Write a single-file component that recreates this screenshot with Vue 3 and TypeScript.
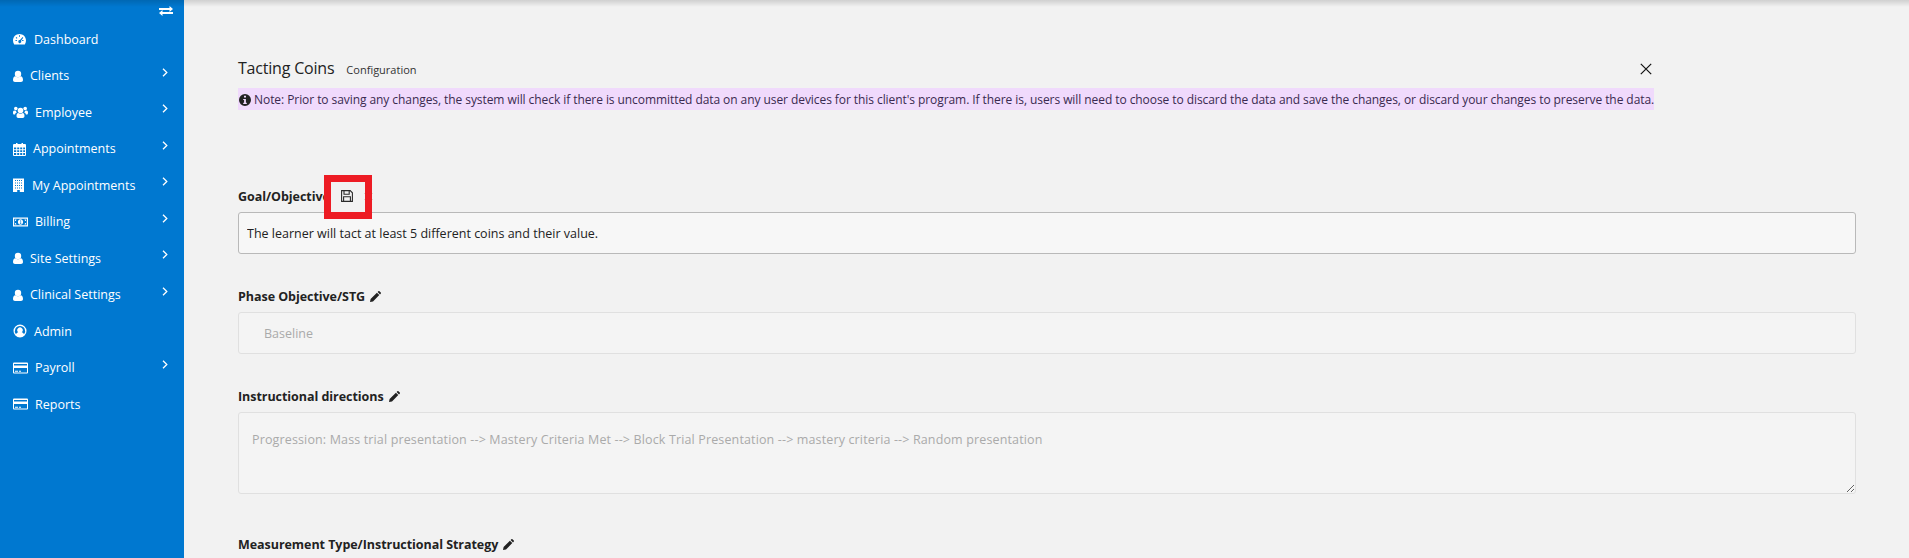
<script setup lang="ts">
interface NavItem { label: string; icon: string; width: number; arrow: boolean }
const nav: NavItem[] = [
  { label: 'Dashboard', icon: 'gauge', width: 14, arrow: false },
  { label: 'Clients', icon: 'user', width: 10, arrow: true },
  { label: 'Employee', icon: 'users', width: 15, arrow: true },
  { label: 'Appointments', icon: 'calendar', width: 13, arrow: true },
  { label: 'My Appointments', icon: 'building', width: 12, arrow: true },
  { label: 'Billing', icon: 'money', width: 15, arrow: true },
  { label: 'Site Settings', icon: 'user', width: 10, arrow: true },
  { label: 'Clinical Settings', icon: 'user', width: 10, arrow: true },
  { label: 'Admin', icon: 'circle', width: 14, arrow: false },
  { label: 'Payroll', icon: 'card', width: 15, arrow: true },
  { label: 'Reports', icon: 'card', width: 15, arrow: false },
]
</script>

<template>
  <div class="page">
    <aside class="sidebar">
      <div class="toggle">
        <svg width="14" height="10" viewBox="0 0 14 10" fill="#fff">
          <path d="M0 2h10.5V0L14 3l-3.500 3V4H0zM14 6H3.500V4L0 7l3.500 3V8H14z" />
        </svg>
      </div>
      <nav class="nav">
        <a v-for="item in nav" :key="item.label" class="nav-item">
          <svg class="nav-icon" :width="item.width" height="14" :viewBox="`0 0 ${item.width} 14`" fill="#fff">
            <template v-if="item.icon === 'gauge'">
              <path fill-rule="evenodd" d="M6.500 2C3 2 0 4.800 0 8.500c0 1.500.4 2.800 1.200 3.900.1.100.3.200.5.200h9.600c.2 0 .4-.1.500-.2.800-1.100 1.200-2.400 1.200-3.900C13 4.800 10 2 6.500 2zM6 3.300h1v1.400H6zM2.500 8h1.400v1H2.500zM3.400 5l1 1-.7.700-1-1zM9.100 9H10.500V8H9.100zM9.600 5l.7.700-2.300 3a1.500 1.500 0 1 1-1-.6z" />
            </template>
            <template v-else-if="item.icon === 'user'">
              <circle cx="5" cy="5" r="3.200" />
              <path d="M0 11c0-2.500 1-3.500 2.300-3.800C3 7.900 4 8.300 5 8.300s2-.4 2.700-1.100C9 7.500 10 8.500 10 11c0 1.300-.8 2-2 2H2c-1.200 0-2-.7-2-2z" />
            </template>
            <template v-else-if="item.icon === 'users'">
              <circle cx="7.500" cy="5.500" r="2.800" />
              <circle cx="2.800" cy="3.600" r="1.800" />
              <circle cx="12.200" cy="3.600" r="1.800" />
              <path d="M3.500 11c0-2 .7-2.800 1.800-3 .6.500 1.300.8 2.200.8s1.600-.3 2.200-.8c1.100.2 1.800 1 1.800 3 0 1.200-.7 2-1.800 2H5.300c-1.100 0-1.800-.8-1.800-2z" />
              <path d="M0 7.500C0 6.300.5 5.700 1.300 5.500c.5.300 1 .500 1.600.500.200.600.500 1.100 1 1.500-1 .3-1.700 1-1.800 2H1c-.6 0-1-.6-1-1.500zM15 7.500c0-1.200-.5-1.800-1.300-2-.5.300-1 .5-1.600.5-.2.600-.5 1.100-1 1.500 1 .3 1.700 1 1.800 2H14c.6 0 1-.6 1-1.500z" />
            </template>
            <template v-else-if="item.icon === 'calendar'">
              <path fill-rule="evenodd" d="M1 2h2V1h1.500v1h4V1H10v1h2a1 1 0 0 1 1 1v10a1 1 0 0 1-1 1H1a1 1 0 0 1-1-1V3a1 1 0 0 1 1-1zM1 5.500v1.700h2.200V5.500zm3.200 0v1.700h2V5.500zm3 0v1.700h2V5.500zm3 0v1.700H12V5.500zM1 8.200v1.800h2.200V8.200zm3.200 0v1.800h2V8.200zm3 0v1.800h2V8.200zm3 0v1.800H12V8.200zM1 11v2h2.200v-2zm3.200 0v2h2v-2zm3 0v2h2v-2zm3 0v2H12v-2z" />
            </template>
            <template v-else-if="item.icon === 'building'">
              <path fill-rule="evenodd" d="M0 .5h11v13.500H6.800v-2H4.200v2H0zM2 2v1h1V2zm2 0v1h1V2zm2 0v1h1V2zm2 0v1h1V2zM2 4.500v1h1v-1zm2 0v1h1v-1zm2 0v1h1v-1zm2 0v1h1v-1zM2 7v1h1V7zm2 0v1h1V7zm2 0v1h1V7zm2 0v1h1V7zM2 9.500v1h1v-1zm2 0v1h1v-1zm2 0v1h1v-1zm2 0v1h1v-1z" />
            </template>
            <template v-else-if="item.icon === 'money'">
              <path fill-rule="evenodd" d="M0 2.500h15v9H0zM1.200 3.700v6.600h12.600V3.700zM7.500 4.200c1.500 0 2.600 1.300 2.600 2.800S9 9.800 7.500 9.800 4.900 8.500 4.900 7s1.100-2.800 2.600-2.800zM2 4.500h1.500C3.500 5.300 2.800 6 2 6zm11 0V6c-.8 0-1.500-.7-1.500-1.500zM2 8c.8 0 1.500.7 1.500 1.500H2zm11 0v1.500h-1.500c0-.8.7-1.500 1.500-1.500zM7 5.500v.6h.5v2H6.900v.6h1.400v-.6h-.2V5.500z" />
            </template>
            <template v-else-if="item.icon === 'circle'">
              <path fill-rule="evenodd" d="M7 .5a6.500 6.500 0 1 1 0 13 6.500 6.500 0 0 1 0-13zm0 1.400A5.100 5.100 0 0 0 3 10.200c.5-1.200 1.300-1.800 2.200-2a2.700 2.700 0 1 1 3.600 0c.9.2 1.700.8 2.200 2A5.100 5.100 0 0 0 7 1.900z" />
            </template>
            <template v-else>
              <path fill-rule="evenodd" d="M1 1.500h13a1 1 0 0 1 1 1v9a1 1 0 0 1-1 1H1a1 1 0 0 1-1-1v-9a1 1 0 0 1 1-1zM1 3v1.600h13V3zm0 4v4.500h13V7zm1 2.800h3v.9H2zm4 0h2v.9H6z" />
            </template>
          </svg>
          <span class="nav-label">{{ item.label }}</span>
          <svg v-if="item.arrow" class="nav-arrow" width="6" height="9" viewBox="0 0 6 9" fill="none" stroke="#fff" stroke-width="1.300">
            <path d="M1 .8 4.800 4.500 1 8.200" />
          </svg>
        </a>
      </nav>
    </aside>

    <main class="main">
      <header class="head">
        <div class="title-row">
          <h1 class="title">Tacting Coins</h1>
          <span class="subtitle">Configuration</span>
          <button class="close" aria-label="Close">
            <svg width="12" height="12" viewBox="0 0 12 12" fill="none" stroke="#111" stroke-width="1.200">
              <path d="M.8.8l10.400 10.400M11.200.8.800 11.200" />
            </svg>
          </button>
        </div>
        <p class="note">
          <span class="note-text"><svg class="info" width="12" height="12" viewBox="0 0 12 12"><path fill="#222" fill-rule="evenodd" d="M6 0a6 6 0 1 1 0 12A6 6 0 0 1 6 0zM5 1.800v1.800h2V1.800zM4.200 5v1.100h.9v2.700h-.9V10h3.600V8.800h-.9V5z" /></svg> Note: Prior to saving any changes, the system will check if there is uncommitted data on any user devices for this client's program. If there is, users will need to choose to discard the data and save the changes, or discard your changes to preserve the data.</span>
        </p>
      </header>

      <section class="field first">
        <div class="label-row">
          <label class="label">Goal/Objective</label>
          <span class="goal-actions">
            <svg width="12" height="12" viewBox="0 0 12 12" fill="none" stroke="#2a2a2a" stroke-width="1.100">
              <path d="M.6.6h8.600l2.200 2.200v8.600H.6z" />
              <path d="M3 .8v3.400h5.200V.8M2.600 11.200V6.800h6.800v4.400" />
            </svg>
            <svg width="9" height="9" viewBox="0 0 9 9" fill="none" stroke="#8a6a3a" stroke-width="1.300">
              <path d="M1 1l7 7M8 1 1 8" />
            </svg>
          </span>
        </div>
        <input class="control active" value="The learner will tact at least 5 different coins and their value." />
      </section>

      <section class="field">
        <div class="label-row">
          <label class="label">Phase Objective/STG</label>
          <svg class="pencil" width="11" height="11" viewBox="0 0 11 11" fill="#222"><path d="M0 11l.6-3L6.900 1.700l2.400 2.400L3 10.400zM7.600 1 8.400.2c.3-.3.7-.3 1 0l1.400 1.400c.3.3.3.7 0 1l-.8.800z" /></svg>
        </div>
        <input class="control phase" disabled value="Baseline" />
      </section>

      <section class="field">
        <div class="label-row">
          <label class="label">Instructional directions</label>
          <svg class="pencil" width="11" height="11" viewBox="0 0 11 11" fill="#222"><path d="M0 11l.6-3L6.900 1.700l2.400 2.400L3 10.400zM7.600 1 8.400.2c.3-.3.7-.3 1 0l1.400 1.400c.3.3.3.7 0 1l-.8.800z" /></svg>
        </div>
        <textarea class="control area" readonly>Progression: Mass trial presentation --&gt; Mastery Criteria Met --&gt; Block Trial Presentation --&gt; mastery criteria --&gt; Random presentation</textarea>
      </section>

      <section class="field last">
        <div class="label-row">
          <label class="label">Measurement Type/Instructional Strategy</label>
          <svg class="pencil" width="11" height="11" viewBox="0 0 11 11" fill="#222"><path d="M0 11l.6-3L6.900 1.700l2.400 2.400L3 10.400zM7.600 1 8.400.2c.3-.3.7-.3 1 0l1.400 1.400c.3.3.3.7 0 1l-.8.800z" /></svg>
        </div>
      </section>

      <div class="highlight"></div>
    </main>
  </div>
</template>

<style>
html, body { margin: 0; height: 100%; overflow: hidden; background: #f2f2f2; }
</style>

<style scoped>
.page {
  position: relative;
  display: flex;
  height: 558px;
  overflow: hidden;
  font-family: "Open Sans", "Noto Sans", sans-serif;
  font-size: 12.500px;
  color: #222;
}
.page::after {
  content: "";
  position: absolute;
  left: 0;
  right: 0;
  top: 0;
  height: 7px;
  background: linear-gradient(rgba(0, 0, 0, .14), rgba(0, 0, 0, 0));
  pointer-events: none;
}
.sidebar {
  flex: 0 0 184px;
  background: #0078d0;
  color: #fff;
  display: flex;
  flex-direction: column;
  box-sizing: border-box;
  padding-top: 6px;
}
.toggle {
  display: flex;
  justify-content: flex-end;
  padding-right: 11px;
  height: 14px;
}
.nav { display: flex; flex-direction: column; margin-top: 1px; }
.nav-item {
  display: flex;
  align-items: center;
  height: 36.500px;
  padding-left: 13px;
  position: relative;
  color: #fff;
}
.nav-icon { flex: none; margin-right: 7px; }
.nav-label { white-space: nowrap; }
.nav-arrow { position: absolute; left: 162px; top: 10px; }
.main {
  flex: 1;
  position: relative;
  box-sizing: border-box;
  padding: 0 53px 0 54px;
  background: #f2f2f2;
}
.head { width: 1414px; padding-top: 57px; }
.title-row { display: flex; align-items: baseline; height: 24px; }
.title { margin: 0; font-size: 16px; font-weight: 400; letter-spacing: -.2px; color: #222; }
.subtitle { margin-left: 12px; font-size: 11px; color: #333; }
.close {
  margin-left: auto;
  padding: 0;
  border: 0;
  background: none;
  align-self: center;
  display: flex;
}
.note { margin: 10px 0 0; white-space: nowrap; line-height: 18px; font-size: 12px; letter-spacing: -.07px; }
.note-text { background: #f0dafc; color: #3a2a50; padding: 3px 0 2px; }
.info { vertical-align: -2px; margin-left: 1px; }
.field { margin-top: 33px; }
.first { margin-top: 78px; }
.label-row { display: flex; align-items: center; height: 18px; gap: 5px; margin-bottom: 7px; }
.label { font-weight: 700; letter-spacing: -.05px; color: #222; }
.goal-actions { display: flex; align-items: center; gap: 11px; margin-left: 6px; }
.control {
  display: block;
  box-sizing: border-box;
  width: 100%;
  height: 42px;
  padding: 0 8px;
  margin: 0;
  font: inherit;
  border: 1px solid #e0e0e0;
  border-radius: 3px;
  background: #f4f4f4;
  color: #aaa;
  outline: none;
}
.active { background: #f7f7f7; border-color: #b9b9b9; color: #222; }
.phase { padding-left: 25px; }
.area { height: 82px; padding: 18px 13px; resize: both; letter-spacing: .14px; }
.last { margin-top: 41px; }
.highlight {
  position: absolute;
  left: 140px;
  top: 175px;
  width: 48px;
  height: 44px;
  box-sizing: border-box;
  border: 7px solid #ed1c24;
  pointer-events: none;
}
</style>
